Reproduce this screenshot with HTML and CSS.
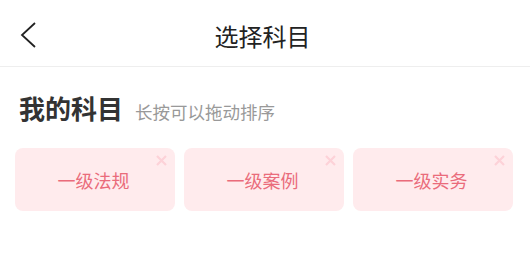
FILE: index.html
```html
<!DOCTYPE html>
<html lang="zh-CN">
<head>
<meta charset="utf-8">
<title>选择科目</title>
<link rel="stylesheet" href="styles.css">
</head>
<body>
<div class="page">
  <header class="navbar">
    <span class="back">
      <svg width="16" height="26" viewBox="0 0 16 26"><polyline points="15,1 2,13 15,25" fill="none" stroke="#222" stroke-width="1.8"/></svg>
    </span>
    <h1 class="title">选择科目</h1>
  </header>
  <section class="section">
    <div class="section-head">
      <h2 class="heading">我的科目</h2>
      <span class="hint">长按可以拖动排序</span>
    </div>
    <div class="cards">
      <div class="card"><span class="card-text">一级法规</span><span class="close"><svg width="11" height="11" viewBox="0 0 11 11"><path d="M1 1L10 10M10 1L1 10" stroke="#fdd2d8" stroke-width="2.2"/></svg></span></div>
      <div class="card"><span class="card-text">一级案例</span><span class="close"><svg width="11" height="11" viewBox="0 0 11 11"><path d="M1 1L10 10M10 1L1 10" stroke="#fdd2d8" stroke-width="2.2"/></svg></span></div>
      <div class="card"><span class="card-text">一级实务</span><span class="close"><svg width="11" height="11" viewBox="0 0 11 11"><path d="M1 1L10 10M10 1L1 10" stroke="#fdd2d8" stroke-width="2.2"/></svg></span></div>
    </div>
  </section>
</div>
</body>
</html>
```
FILE: styles.css
```css
* { box-sizing: border-box; }
html, body { margin: 0; padding: 0; background: #fff; }
body { font-family: "Noto Sans CJK SC", "Noto Sans", sans-serif; }
.page { width: 530px; }
.navbar {
  position: relative;
  height: 67px;
  border-bottom: 1px solid #eeeeee;
  display: flex;
  align-items: center;
  justify-content: center;
}
.back {
  position: absolute;
  left: 20px;
  top: 22px;
  width: 16px;
  height: 26px;
  display: block;
}
.back svg { display: block; }
.title {
  margin: 0 5px 0 0;
  font-size: 24px;
  line-height: 32px;
  font-weight: 400;
  color: #222;
  padding-top: 6px;
}
.section { padding: 23px 15px 0 15px; }
.section-head {
  display: flex;
  align-items: baseline;
  gap: 10px;
  padding-left: 4px;
}
.heading {
  margin: 0;
  font-size: 26px;
  line-height: 36px;
  font-weight: 700;
  color: #333;
}
.hint {
  font-size: 17.5px;
  color: #999;
  padding-left: 2px;
}
.cards {
  margin-top: 22px;
  display: grid;
  grid-template-columns: repeat(3, 160px);
  gap: 9px;
}
.card {
  position: relative;
  height: 63px;
  border-radius: 8px;
  background: #ffebed;
  display: flex;
  align-items: center;
  justify-content: center;
}
.card-text {
  font-size: 18px;
  line-height: 24px;
  color: #ea6b7b;
  margin-right: 3px;
}
.close {
  position: absolute;
  top: 7px;
  right: 8px;
  width: 11px;
  height: 11px;
}
.close svg { display: block; }
```
